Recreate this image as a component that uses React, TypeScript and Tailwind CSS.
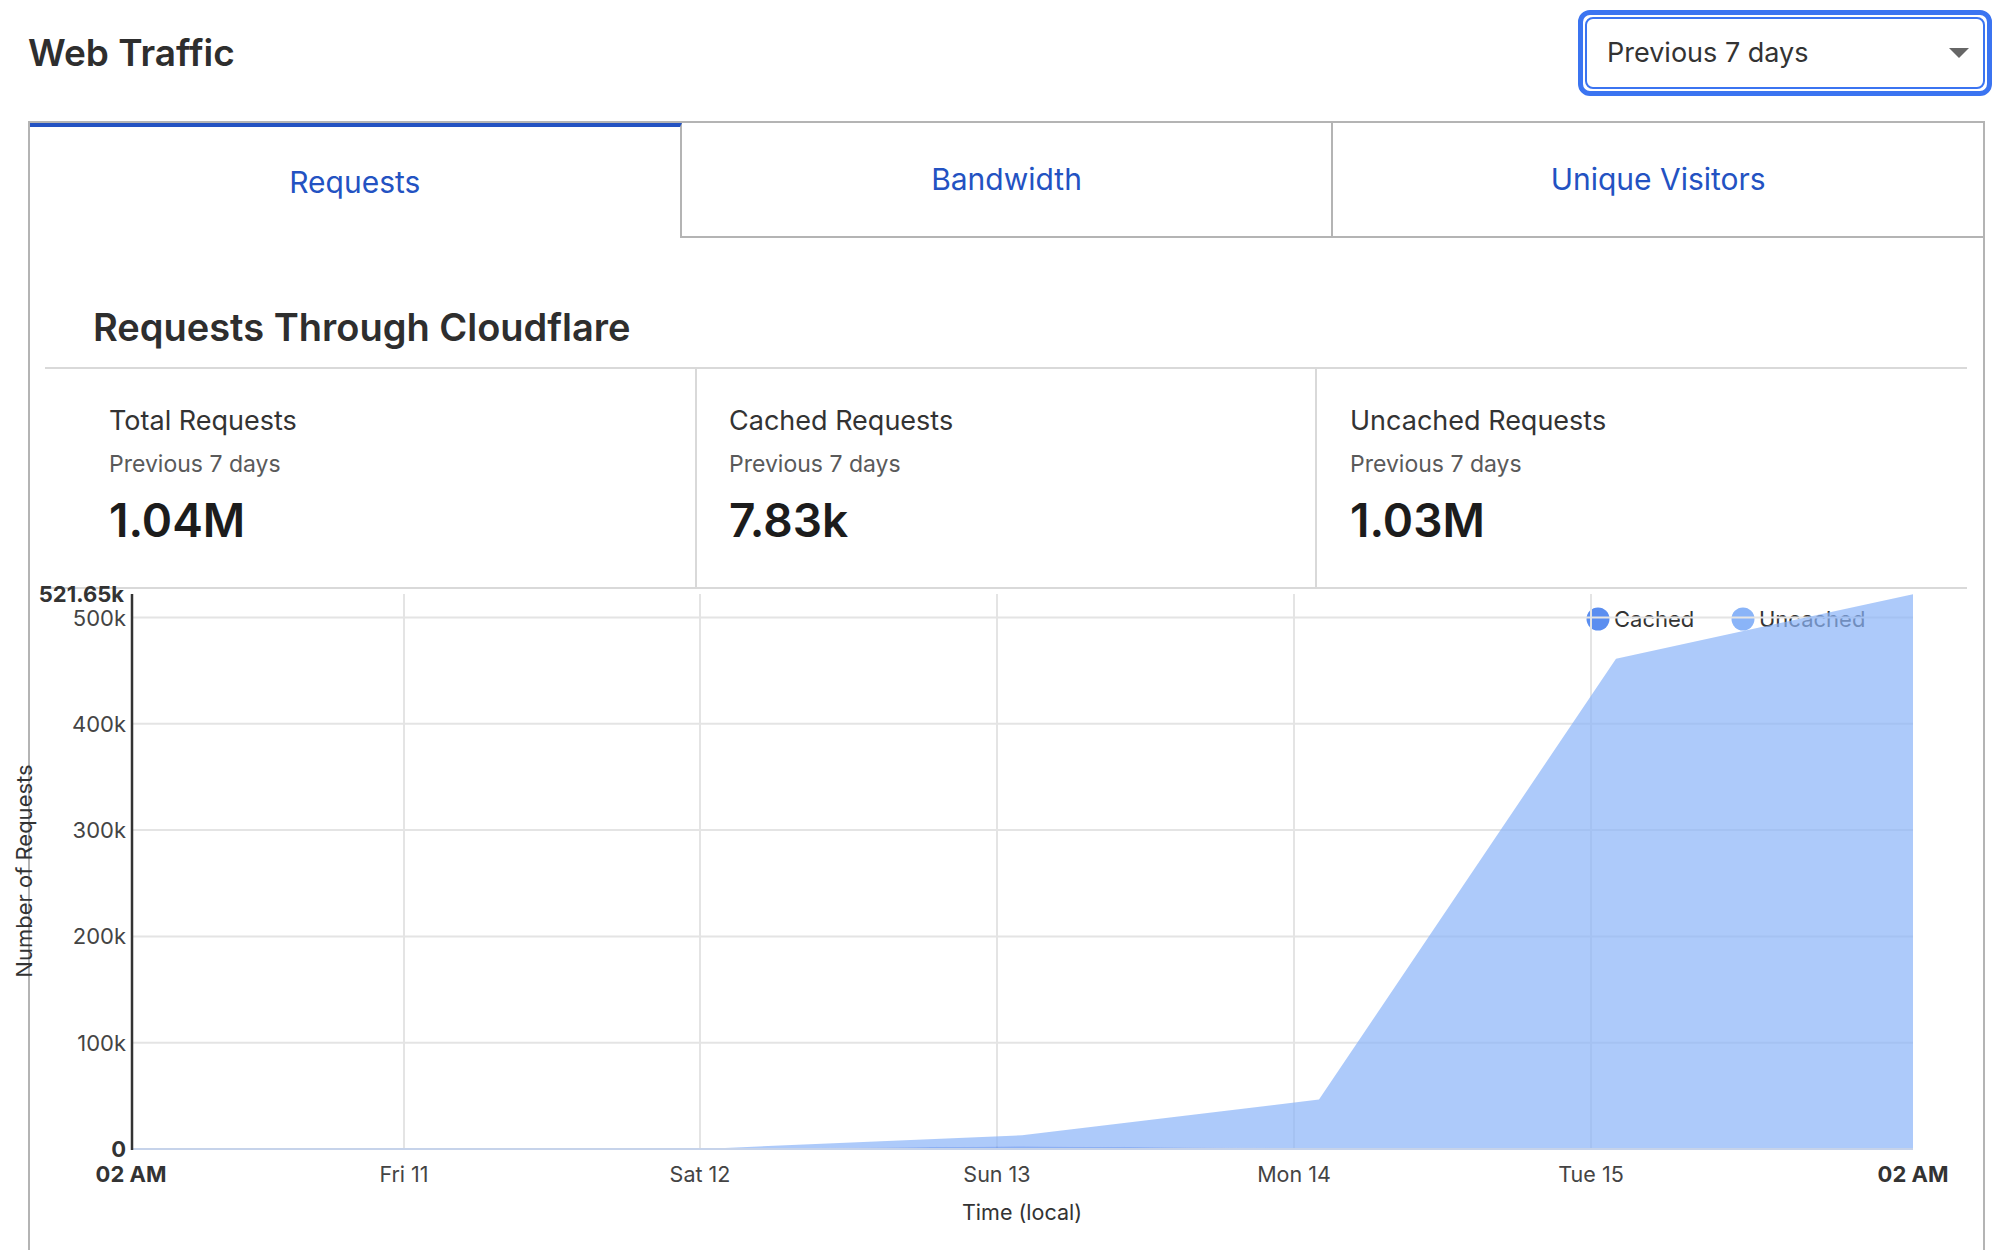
import React from "react";

const days = [
  { label: "Fri 11", x: 404 },
  { label: "Sat 12", x: 700 },
  { label: "Sun 13", x: 997 },
  { label: "Mon 14", x: 1294 },
  { label: "Tue 15", x: 1591 },
];

const yTicks = [
  { label: "100k", v: 100000 },
  { label: "200k", v: 200000 },
  { label: "300k", v: 300000 },
  { label: "400k", v: 400000 },
  { label: "500k", v: 500000 },
];

// one point per day at 02 AM
const uncached = [0, 0, 800, 10300, 46000, 461000, 521650];
const cached = [0, 0, 200, 2600, 500, 300, 200];

const X = (t: number) => 131 + t * 12.375;
const Y = (v: number) => 1149 - v * 0.001063;

const stats = [
  { label: "Total Requests", value: "1.04M", cls: "w-[652px] pl-[64px] border-r-2" },
  { label: "Cached Requests", value: "7.83k", cls: "w-[620px] pl-[32px] border-r-2" },
  { label: "Uncached Requests", value: "1.03M", cls: "flex-1 pl-[33px]" },
];

const tabs = ["Requests", "Bandwidth", "Unique Visitors"];

function Chart() {
  const pts = uncached.map((u, i) => ({ x: X(i * 24), c: cached[i], t: cached[i] + u }));
  const cachedTop = pts.map((p) => `${p.x},${Y(p.c)}`).join(" ");
  const cachedPoly = `${X(0)},1149 ${cachedTop} ${X(144)},1149`;
  const totalTop = pts.map((p) => `${p.x},${Y(p.t)}`).join(" ");
  const cachedBack = [...pts].reverse().map((p) => `${p.x},${Y(p.c)}`).join(" ");
  const uncachedPoly = `${totalTop} ${cachedBack}`;

  return (
    <svg
      width={1953}
      height={661}
      viewBox="30 589 1953 661"
      className="block overflow-visible"
    >
      {/* legend */}
      <circle cx={1598} cy={619} r={11.5} fill="#5b8ef0" />
      <text x={1614} y={627} fontSize={22} fill="#333">Cached</text>
      <circle cx={1743} cy={619} r={11.5} fill="#8ab4f8" />
      <text x={1759} y={627} fontSize={22} fill="#333">Uncached</text>

      {yTicks.map((t) => (
        <line key={t.label} x1={131} x2={1913} y1={Y(t.v)} y2={Y(t.v)} stroke="#e4e4e4" strokeWidth={2} />
      ))}
      {days.map((d) => (
        <line key={d.label} x1={d.x} x2={d.x} y1={594} y2={1149} stroke="#e4e4e4" strokeWidth={2} />
      ))}

      <polygon points={uncachedPoly} fill="#8ab4f8" fillOpacity={0.7} />
      <polygon points={cachedPoly} fill="#5b8ef0" fillOpacity={0.7} />

      <line x1={131} x2={1913} y1={1149} y2={1149} stroke="#c6d3ea" strokeWidth={2} />
      <line x1={132} x2={132} y1={594} y2={1150} stroke="#333" strokeWidth={2.5} />

      <text x={124} y={602} fontSize={22} fontWeight={700} fill="#333" textAnchor="end">521.65k</text>
      {yTicks.map((t) => (
        <text key={t.label} x={126} y={Y(t.v) + 8} fontSize={22} fill="#444" textAnchor="end">
          {t.label}
        </text>
      ))}
      <text x={126} y={1157} fontSize={22} fontWeight={700} fill="#333" textAnchor="end">0</text>

      <text x={131} y={1182} fontSize={22} fontWeight={700} fill="#333" textAnchor="middle">02 AM</text>
      {days.map((d) => (
        <text key={d.label} x={d.x} y={1182} fontSize={21.5} fill="#444" textAnchor="middle">
          {d.label}
        </text>
      ))}
      <text x={1913} y={1182} fontSize={22} fontWeight={700} fill="#333" textAnchor="middle">02 AM</text>

      <text x={1022} y={1220} fontSize={21.5} fill="#333" textAnchor="middle">Time (local)</text>
      <text transform="translate(32 871) rotate(-90)" fontSize={22} fill="#333" textAnchor="middle">
        Number of Requests
      </text>
    </svg>
  );
}

export default function App() {
  return (
    <div className="w-[2000px] h-[1250px] overflow-hidden bg-white font-[Inter,sans-serif] text-[#333]">
      <div className="flex items-center justify-between pl-[28px] pr-[8px] pt-[10px]">
        <h1 className="text-[37px] font-semibold leading-[44px] text-[#2e2e2e]">Web Traffic</h1>
        <div className="w-[414px] h-[86px] rounded-[12px] border-[5px] border-[#3b74f1] p-[2px]">
          <div className="h-full rounded-[8px] border-2 border-[#3b74f1] flex items-center justify-between pl-[20px] pr-[14px]">
            <span className="text-[27px] text-[#333]">Previous 7 days</span>
            <svg width={20} height={10} viewBox="0 0 20 10">
              <polygon points="0,0 20,0 10,10" fill="#666" />
            </svg>
          </div>
        </div>
      </div>

      <div className="mt-[25px] ml-[28px] w-[1957px] border-2 border-b-0 border-[#b4b4b4]">
        <div className="flex h-[115px]">
          {tabs.map((t, i) => (
            <div
              key={t}
              className={
                i === 0
                  ? "flex-1 border-t-4 border-t-[#2352c2] border-r-2 border-r-[#b4b4b4] flex items-center justify-center"
                  : i === 1
                  ? "flex-1 border-b-2 border-r-2 border-[#b4b4b4] flex items-center justify-center"
                  : "flex-1 border-b-2 border-[#b4b4b4] flex items-center justify-center"
              }
            >
              <span className="text-[30px] text-[#2352c2]">{t}</span>
            </div>
          ))}
        </div>

        <div className="pl-[15px] pr-[16px]">
          <div className="pt-[66px] pb-[17px] pl-[48px] border-b-2 border-[#d9d9d9]">
            <h2 className="text-[38px] leading-[46px] font-semibold text-[#2e2e2e]">
              Requests Through Cloudflare
            </h2>
          </div>
          <div className="flex border-b-2 border-[#d9d9d9]">
            {stats.map((s) => (
              <div key={s.label} className={`${s.cls} border-[#d9d9d9] pt-[35px] pb-[39px]`}>
                <div className="text-[27px] leading-[33px] text-[#333]">{s.label}</div>
                <div className="mt-[13px] text-[23px] leading-[28px] text-[#5a5a5a]">Previous 7 days</div>
                <div className="mt-[14px] text-[46px] leading-[56px] font-semibold text-[#1c1c1c]">{s.value}</div>
              </div>
            ))}
          </div>
        </div>

        <Chart />
      </div>
    </div>
  );
}
